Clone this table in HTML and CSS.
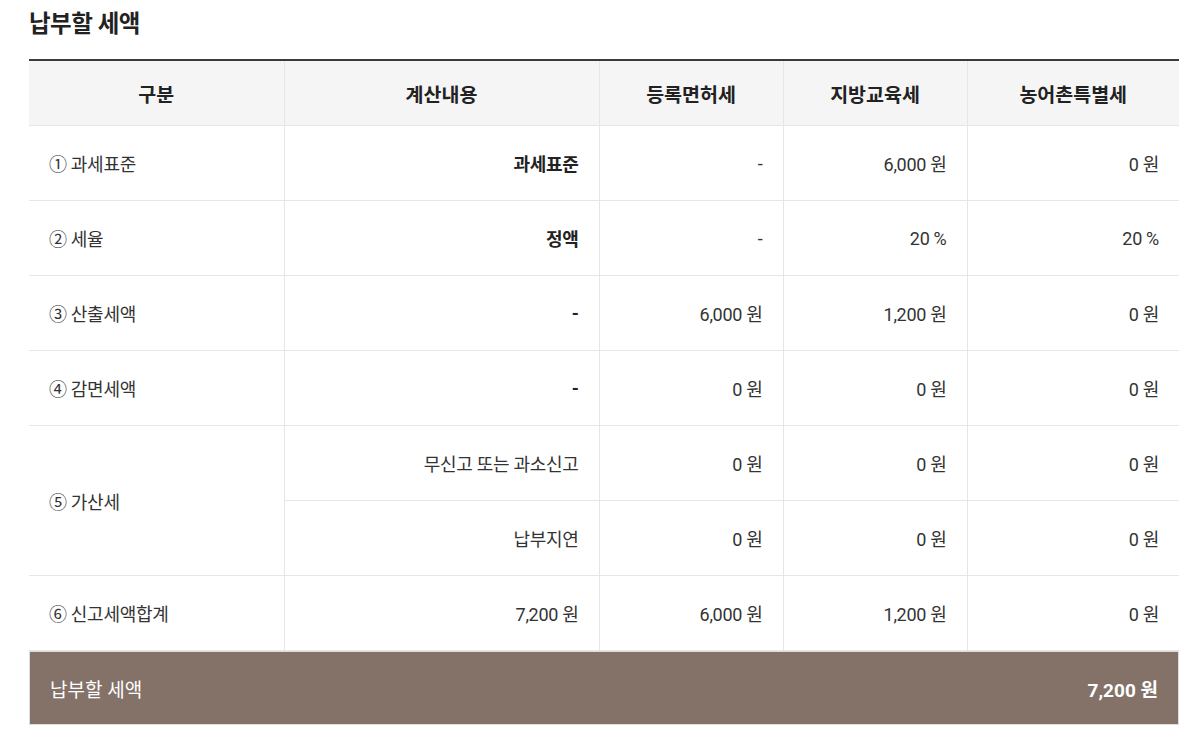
FILE: index.html
```html
<!DOCTYPE html>
<html lang="ko">
<head>
<meta charset="utf-8">
<title>납부할 세액</title>
<link rel="stylesheet" href="styles.css">
</head>
<body>
<div class="wrap">
  <h2 class="title">납부할 세액</h2>
  <table class="tax">
    <colgroup>
      <col class="c1"><col class="c2"><col class="c3"><col class="c4"><col class="c5">
    </colgroup>
    <thead>
      <tr>
        <th>구분</th><th>계산내용</th><th>등록면허세</th><th>지방교육세</th><th>농어촌특별세</th>
      </tr>
    </thead>
    <tbody>
      <tr>
        <td class="lbl">① 과세표준</td><td class="b">과세표준</td><td>-</td><td>6,000 원</td><td>0 원</td>
      </tr>
      <tr>
        <td class="lbl">② 세율</td><td class="b">정액</td><td>-</td><td>20 %</td><td>20 %</td>
      </tr>
      <tr>
        <td class="lbl">③ 산출세액</td><td class="b">-</td><td>6,000 원</td><td>1,200 원</td><td>0 원</td>
      </tr>
      <tr>
        <td class="lbl">④ 감면세액</td><td class="b">-</td><td>0 원</td><td>0 원</td><td>0 원</td>
      </tr>
      <tr>
        <td class="lbl" rowspan="2">⑤ 가산세</td><td>무신고 또는 과소신고</td><td>0 원</td><td>0 원</td><td>0 원</td>
      </tr>
      <tr>
        <td>납부지연</td><td>0 원</td><td>0 원</td><td>0 원</td>
      </tr>
      <tr>
        <td class="lbl">⑥ 신고세액합계</td><td>7,200 원</td><td>6,000 원</td><td>1,200 원</td><td>0 원</td>
      </tr>
    </tbody>
  </table>
  <div class="total">
    <span class="total-label">납부할 세액</span>
    <span class="total-value">7,200 원</span>
  </div>
</div>
</body>
</html>
```
FILE: styles.css
```css
html, body {
  margin: 0;
  padding: 0;
  background: #fff;
}
body {
  font-family: Roboto, "Noto Sans CJK KR", "Noto Sans", sans-serif;
  color: #333;
}
.wrap {
  width: 1150px;
  margin-left: 29px;
}
.title {
  margin: 0;
  padding-top: 7px;
  height: 59px;
  box-sizing: border-box;
  font-size: 23.5px;
  font-weight: 700;
  color: #222;
  line-height: 34px;
  letter-spacing: -0.5px;
}
.tax {
  width: 100%;
  border-collapse: collapse;
  border-top: 2px solid #3a3a3f;
  table-layout: fixed;
}
.c1 { width: 255px; }
.c2 { width: 315px; }
.c3 { width: 184px; }
.c4 { width: 184px; }
.c5 { width: 212px; }
.tax th {
  height: 64px;
  background: #f5f5f5;
  font-size: 19.5px;
  font-weight: 700;
  color: #222;
  text-align: center;
  border-bottom: 1px solid #e6e6e6;
  border-left: 1px solid #e6e6e6;
  padding: 0;
}
.tax td {
  height: 74px;
  padding: 0 20px;
  font-size: 18px;
  color: #333;
  text-align: right;
  border-bottom: 1px solid #e6e6e6;
  border-left: 1px solid #e6e6e6;
  letter-spacing: -0.3px;
}
.tax th:first-child,
.tax td.lbl {
  border-left: none;
}
.tax td.lbl {
  text-align: left;
}
.tax td.b {
  font-weight: 700;
  color: #222;
}
.total {
  display: flex;
  justify-content: space-between;
  align-items: center;
  height: 74px;
  box-sizing: border-box;
  background: #847269;
  border: 1px solid #ddd;
  padding: 0 20px;
  color: #fff;
  font-size: 19px;
}
.total-value {
  font-weight: 700;
}
```
